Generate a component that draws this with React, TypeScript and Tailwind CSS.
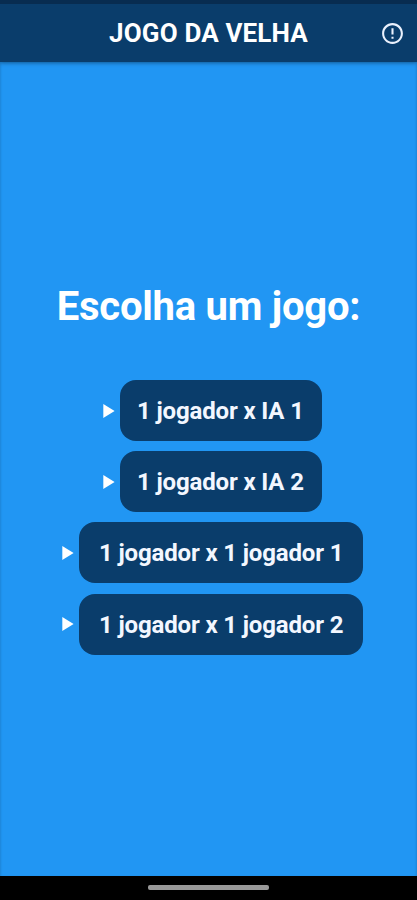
interface GameOption {
  id: string;
  label: string;
  buttonClass: string;
}

const games: GameOption[] = [
  { id: 'ia-1', label: '1 jogador x IA 1', buttonClass: 'w-[202px] pl-[17px]' },
  { id: 'ia-2', label: '1 jogador x IA 2', buttonClass: 'w-[202px] pl-[17px]' },
  { id: 'jogador-1', label: '1 jogador x 1 jogador 1', buttonClass: 'w-[284px] pl-[20px]' },
  { id: 'jogador-2', label: '1 jogador x 1 jogador 2', buttonClass: 'w-[284px] pl-[20px]' },
];

function AlertIcon() {
  return (
    <svg viewBox="0 0 24 24" className="h-[25px] w-[25px] fill-[#eaf1fd]">
      <path d="M11 15h2v2h-2zm0-8h2v6h-2zm.99-5C6.47 2 2 6.48 2 12s4.47 10 9.99 10C17.52 22 22 17.52 22 12S17.52 2 11.99 2zM12 20c-4.42 0-8-3.58-8-8s3.58-8 8-8 8 3.58 8 8-3.58 8-8 8z" />
    </svg>
  );
}

function Header() {
  return (
    <header className="relative shadow-[0_1px_4px_rgba(0,0,0,0.4)]">
      {/* Status bar strip */}
      <div className="h-1 bg-[#082c50]" />
      <div className="grid h-[58px] grid-cols-[1fr_auto_1fr] items-center bg-[#0a3d6b]">
        <span />
        <h1 className="text-[26px] leading-none font-bold tracking-[0.15px] whitespace-nowrap text-white">
          JOGO DA VELHA
        </h1>
        <button className="mr-3 justify-self-end" aria-label="Sobre">
          <AlertIcon />
        </button>
      </div>
    </header>
  );
}

function GameRow({ game }: { game: GameOption }) {
  return (
    <li className="flex items-center gap-[5px]">
      <svg viewBox="0 0 12 14" className="h-[14px] w-3 fill-white">
        <path d="M0.3 0v14L11.6 7z" />
      </svg>
      <button
        className={`h-[61px] rounded-2xl bg-[#0a3d6b] pt-px text-left text-2xl font-bold tracking-[-0.15px] whitespace-nowrap text-[#f3f7ff] ${game.buttonClass}`}
      >
        {game.label}
      </button>
    </li>
  );
}

export default function App() {
  return (
    <div className="flex h-screen flex-col overflow-hidden bg-[#2196f3] font-['Roboto',sans-serif]">
      <Header />
      <main className="flex flex-1 flex-col items-center pt-[221px] shadow-[inset_2px_0_2px_-1px_rgba(0,0,0,0.12),inset_-2px_0_2px_-1px_rgba(0,0,0,0.12)]">
        <h2 className="text-[40px] leading-[48px] font-bold tracking-[-0.25px] whitespace-nowrap text-white">
          Escolha um jogo:
        </h2>
        <ul className="mt-[49.3px] ml-2 flex flex-col items-center gap-[10.1px]">
          {games.map((game) => (
            <GameRow key={game.id} game={game} />
          ))}
        </ul>
      </main>
      {/* Gesture navigation bar */}
      <footer className="flex h-6 justify-center bg-black pt-[9px]">
        <div className="h-[5px] w-[121px] rounded-[2px] bg-[#999999]" />
      </footer>
    </div>
  );
}
